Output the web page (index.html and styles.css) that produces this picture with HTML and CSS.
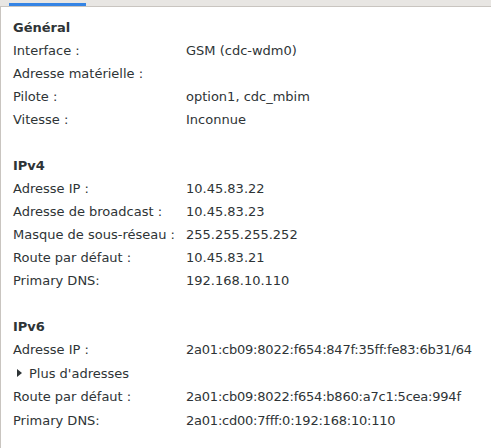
FILE: index.html
```html
<!DOCTYPE html>
<html lang="fr">
<head>
<meta charset="utf-8">
<title>Détails de la connexion</title>
<link rel="stylesheet" href="styles.css">
</head>
<body>
<div class="tabbar"><div class="tab-indicator"></div></div>
<div class="panel">
  <section class="section">
    <div class="heading">Général</div>
    <div class="grid">
      <div class="label">Interface :</div><div class="value">GSM (cdc-wdm0)</div>
      <div class="label">Adresse matérielle :</div><div class="value"></div>
      <div class="label">Pilote :</div><div class="value">option1, cdc_mbim</div>
      <div class="label">Vitesse :</div><div class="value">Inconnue</div>
    </div>
  </section>
  <section class="section">
    <div class="heading">IPv4</div>
    <div class="grid">
      <div class="label">Adresse IP :</div><div class="value">10.45.83.22</div>
      <div class="label">Adresse de broadcast :</div><div class="value">10.45.83.23</div>
      <div class="label">Masque de sous-réseau :</div><div class="value">255.255.255.252</div>
      <div class="label">Route par défaut :</div><div class="value">10.45.83.21</div>
      <div class="label">Primary DNS:</div><div class="value">192.168.10.110</div>
    </div>
  </section>
  <section class="section">
    <div class="heading">IPv6</div>
    <div class="grid grid-v6">
      <div class="label">Adresse IP :</div><div class="value hex">2a01:cb09:8022:f654:847f:35ff:fe83:6b31/64</div>
      <div class="expander"><span class="arrow"></span>Plus d'adresses</div>
      <div class="label">Route par défaut :</div><div class="value hex">2a01:cb09:8022:f654:b860:a7c1:5cea:994f</div>
      <div class="label">Primary DNS:</div><div class="value hex">2a01:cd00:7fff:0:192:168:10:110</div>
    </div>
  </section>
</div>
</body>
</html>
```
FILE: styles.css
```css
html, body {
  margin: 0;
  padding: 0;
  background: #ffffff;
  height: 100%;
}
body {
  font-family: "DejaVu Sans", sans-serif;
  font-size: 13px;
  color: #2e3436;
  overflow: hidden;
}
.tabbar {
  height: 6px;
  background: #e8e6e3;
  border-bottom: 1px solid #c9c5c0;
  display: flex;
  align-items: flex-end;
  padding-left: 9px;
}
.tab-indicator {
  width: 77px;
  height: 3px;
  background: #3584e4;
}
.panel {
  border-left: 1px solid #c9c5c0;
  padding: 9px 0 0 12px;
  min-height: 100%;
  box-sizing: border-box;
}
.section {
  margin-bottom: 23px;
}
.heading {
  font-weight: bold;
  line-height: 23px;
}
.grid {
  display: grid;
  grid-template-columns: 173px 1fr;
  grid-auto-rows: 23px;
  align-items: center;
  white-space: nowrap;
}
.grid-v6 {
  grid-template-rows: 23px 24px 23px 24px;
}
.hex {
  letter-spacing: -0.22px;
}
.expander {
  grid-column: 1 / 3;
  display: flex;
  align-items: center;
  padding-left: 4px;
}
.arrow {
  width: 0;
  height: 0;
  border-top: 4px solid transparent;
  border-bottom: 4px solid transparent;
  border-left: 5px solid #2e3436;
  margin-right: 7px;
}
```
